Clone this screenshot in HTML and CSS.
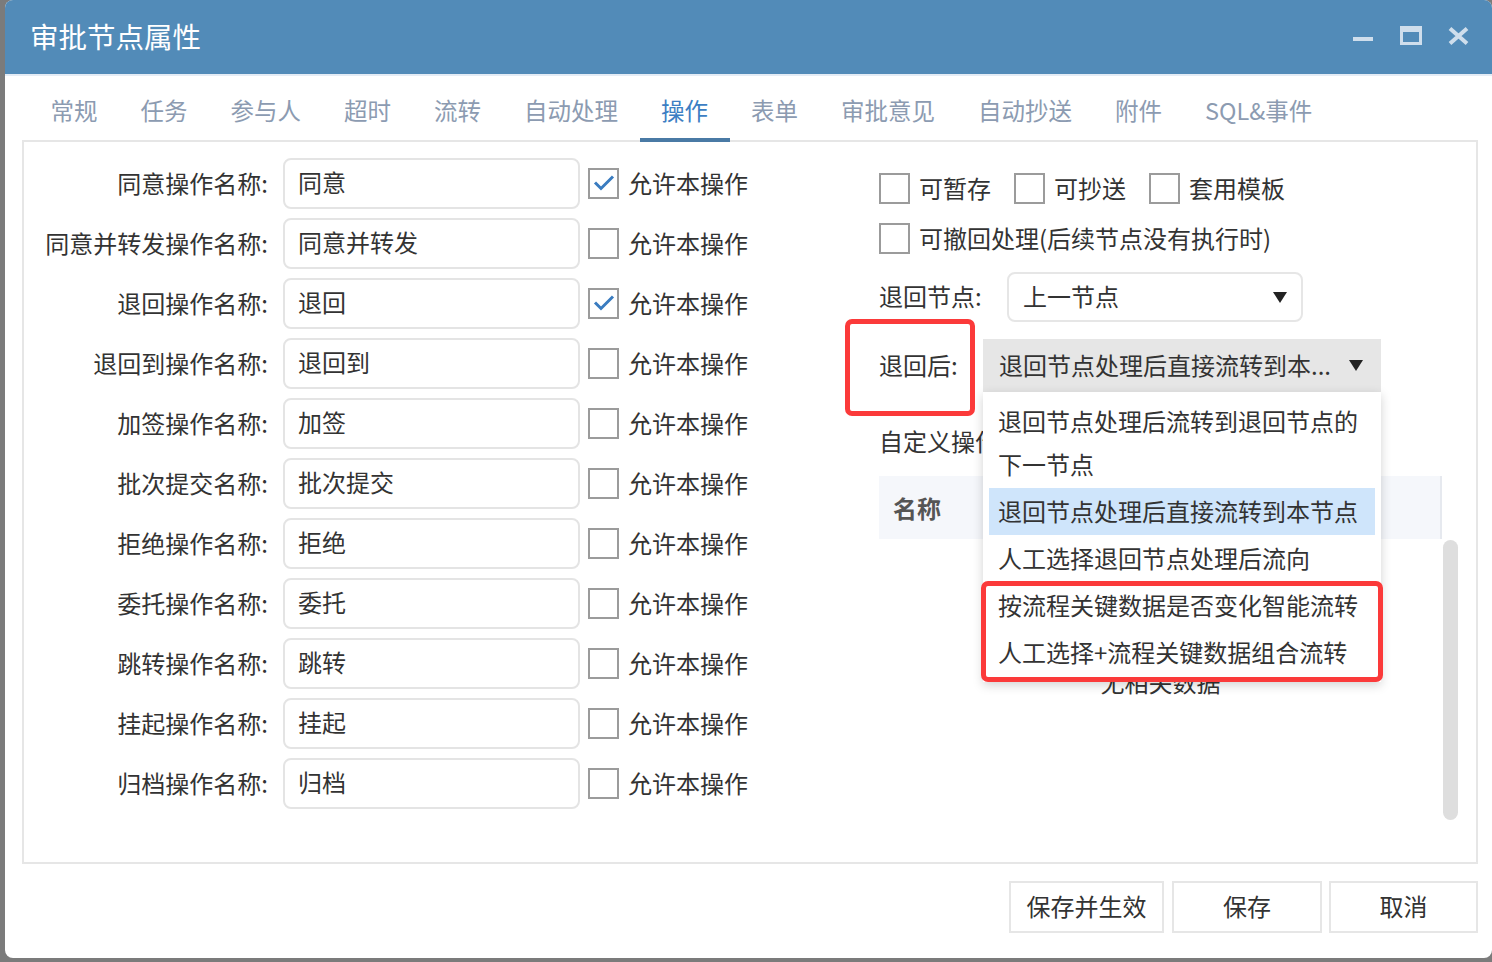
FILE: index.html
```html
<!DOCTYPE html>
<html lang="zh-CN">
<head>
<meta charset="utf-8">
<title>审批节点属性</title>
<link rel="stylesheet" href="styles.css">
</head>
<body>
<div class="window">
  <div class="titlebar">
    <span class="title">审批节点属性</span>
    <div class="controls">
      <svg class="ctl" width="24" height="24" viewBox="0 0 24 24"><rect x="2" y="13" width="20" height="4" fill="currentColor"/></svg>
      <svg class="ctl" width="24" height="24" viewBox="0 0 24 24"><path fill="currentColor" fill-rule="evenodd" d="M1 2H23V21H1Z M4 8H20V18H4Z"/></svg>
      <svg class="ctl" width="24" height="24" viewBox="0 0 24 24"><path d="M4 4.5L21 19.5M21 4.5L4 19.5" stroke="currentColor" stroke-width="4" fill="none"/></svg>
    </div>
  </div>
  <div class="content">
    <div class="tabs">
      <div class="tab">常规</div>
      <div class="tab">任务</div>
      <div class="tab">参与人</div>
      <div class="tab">超时</div>
      <div class="tab">流转</div>
      <div class="tab">自动处理</div>
      <div class="tab active">操作</div>
      <div class="tab">表单</div>
      <div class="tab">审批意见</div>
      <div class="tab">自动抄送</div>
      <div class="tab">附件</div>
      <div class="tab">SQL&amp;事件</div>
    </div>
    <div class="panel">
      <div class="left">
        <div class="row"><span class="label">同意操作名称:</span><div class="input">同意</div><span class="cb checked"><svg width="27" height="27" viewBox="0 0 27 27"><path d="M5 12.5L11 18.5L23 6.5" stroke="#3a7cc0" stroke-width="3" fill="none"/></svg></span><span class="cb-text">允许本操作</span></div>
        <div class="row"><span class="label">同意并转发操作名称:</span><div class="input">同意并转发</div><span class="cb"></span><span class="cb-text">允许本操作</span></div>
        <div class="row"><span class="label">退回操作名称:</span><div class="input">退回</div><span class="cb checked"><svg width="27" height="27" viewBox="0 0 27 27"><path d="M5 12.5L11 18.5L23 6.5" stroke="#3a7cc0" stroke-width="3" fill="none"/></svg></span><span class="cb-text">允许本操作</span></div>
        <div class="row"><span class="label">退回到操作名称:</span><div class="input">退回到</div><span class="cb"></span><span class="cb-text">允许本操作</span></div>
        <div class="row"><span class="label">加签操作名称:</span><div class="input">加签</div><span class="cb"></span><span class="cb-text">允许本操作</span></div>
        <div class="row"><span class="label">批次提交名称:</span><div class="input">批次提交</div><span class="cb"></span><span class="cb-text">允许本操作</span></div>
        <div class="row"><span class="label">拒绝操作名称:</span><div class="input">拒绝</div><span class="cb"></span><span class="cb-text">允许本操作</span></div>
        <div class="row"><span class="label">委托操作名称:</span><div class="input">委托</div><span class="cb"></span><span class="cb-text">允许本操作</span></div>
        <div class="row"><span class="label">跳转操作名称:</span><div class="input">跳转</div><span class="cb"></span><span class="cb-text">允许本操作</span></div>
        <div class="row"><span class="label">挂起操作名称:</span><div class="input">挂起</div><span class="cb"></span><span class="cb-text">允许本操作</span></div>
        <div class="row"><span class="label">归档操作名称:</span><div class="input">归档</div><span class="cb"></span><span class="cb-text">允许本操作</span></div>
      </div>
      <div class="right">
        <div class="opt-row">
          <span class="opt"><span class="cb cb-r"></span><span class="opt-text">可暂存</span></span>
          <span class="opt"><span class="cb cb-r"></span><span class="opt-text">可抄送</span></span>
          <span class="opt"><span class="cb cb-r"></span><span class="opt-text">套用模板</span></span>
        </div>
        <div class="opt-row second">
          <span class="opt"><span class="cb cb-r"></span><span class="opt-text">可撤回处理(后续节点没有执行时)</span></span>
        </div>
        <div class="sel-row node-row">
          <span class="sel-label wide">退回节点:</span>
          <div class="select">
            <span class="sel-text">上一节点</span>
            <svg class="arrow" width="14" height="11" viewBox="0 0 14 11"><polygon points="0,0 14,0 7,11" fill="#222"/></svg>
          </div>
        </div>
        <div class="sel-row after-row">
          <span class="sel-label">退回后:</span>
          <div class="select grey">
            <span class="sel-text">退回节点处理后直接流转到本...</span>
            <svg class="arrow" width="14" height="11" viewBox="0 0 14 11"><polygon points="0,0 14,0 7,11" fill="#222"/></svg>
          </div>
          <div class="mark mark-label"></div>
          <ul class="dropdown">
            <li>退回节点处理后流转到退回节点的下一节点</li>
            <li class="hl">退回节点处理后直接流转到本节点</li>
            <li>人工选择退回节点处理后流向</li>
            <li>按流程关键数据是否变化智能流转</li>
            <li>人工选择+流程关键数据组合流转</li>
            <div class="mark mark-items"></div>
          </ul>
        </div>
        <div class="custom-row">自定义操作：</div>
        <div class="table-wrap">
          <div class="table">
            <div class="thead">名称</div>
            <div class="tbody">无相关数据</div>
          </div>
          <div class="scrollbar"></div>
        </div>
      </div>
    </div>
    <div class="footer">
      <div class="btn b1">保存并生效</div>
      <div class="btn b2">保存</div>
      <div class="btn b3">取消</div>
    </div>
  </div>
</div>
</body>
</html>
```
FILE: styles.css
```css
* { box-sizing: border-box; }
html, body { margin: 0; padding: 0; }
body {
  background: #7b7b7b;
  font-family: "Noto Sans CJK SC", "Noto Sans", sans-serif;
  color: #333;
  width: 1492px;
  height: 962px;
  overflow: hidden;
}
.window {
  margin-left: 5px;
  width: 1487px;
  height: 958px;
  background: #fff;
  border-radius: 8px;
  overflow: hidden;
  display: flex;
  flex-direction: column;
}
.titlebar {
  height: 76px;
  flex: none;
  background: #528bb8;
  border-bottom: 2px solid #e4ecf5;
  display: flex;
  align-items: center;
  padding: 0 22px 0 25px;
}
.title {
  flex: 1;
  color: #fff;
  font-size: 28.5px;
  line-height: 40px;
  margin-top: -3px;
}
.controls {
  display: flex;
  align-self: flex-start;
  margin-top: 24px;
  color: #cfdeec;
}
.ctl { display: block; }
.ctl + .ctl { margin-left: 24px; }
.ctl:last-child { margin-left: 23px; }

.content {
  padding: 0 14px 0 17px;
  flex: 1;
}
.tabs {
  display: flex;
  height: 66px;
  padding-left: 7px;
  position: relative;
  z-index: 2;
}
.tab {
  padding: 6px 21.5px 0;
  font-size: 23.5px;
  color: #8c9bb1;
  display: flex;
  align-items: center;
  border-bottom: 4px solid transparent;
  white-space: nowrap;
}
.tab.active {
  color: #3c7ec3;
  border-bottom-color: #4a7aa5;
}
.panel {
  margin-top: -2px;
  height: 724px;
  border: 2px solid #e6e6e6;
  display: grid;
  grid-template-columns: 855px 1fr;
}
.left { padding-top: 16px; }
.row {
  display: flex;
  align-items: center;
  height: 51px;
  margin-bottom: 9px;
}
.label {
  width: 244px;
  text-align: right;
  font-size: 24px;
  white-space: nowrap;
  margin-top: -3px;
}
.input {
  margin-left: 15px;
  width: 297px;
  height: 51px;
  border: 2px solid #e4e4e4;
  border-radius: 8px;
  padding-left: 13px;
  font-size: 24px;
  line-height: 43px;
}
.cb {
  display: block;
  flex: none;
  width: 31px;
  height: 31px;
  border: 2px solid #9b9b9b;
  background: #fff;
  margin-left: 8px;
}
.cb svg { display: block; }
.cb-text {
  margin-left: 9px;
  font-size: 24px;
  margin-top: -3px;
}

.right {
  padding-top: 31px;
}
.opt-row {
  display: flex;
  align-items: center;
  height: 31px;
}
.opt-row.second { margin-top: 19px; }
.opt {
  display: flex;
  align-items: center;
  margin-right: 23px;
}
.cb-r { margin-left: 0; }
.opt-text {
  margin-left: 9px;
  font-size: 24px;
  white-space: nowrap;
  margin-top: -3px;
}
.sel-row {
  display: flex;
  align-items: center;
  position: relative;
}
.node-row { margin-top: 18px; height: 50px; }
.after-row { margin-top: 17px; height: 53px; z-index: 5; }
.sel-label {
  width: 104px;
  font-size: 24px;
  white-space: nowrap;
  margin-top: -3px;
}
.sel-label.wide { width: 128px; }
.select {
  display: flex;
  align-items: center;
  justify-content: space-between;
  width: 296px;
  height: 50px;
  border: 2px solid #e6e6e6;
  border-radius: 8px;
  padding: 0 14px 0 14px;
  font-size: 24px;
}
.select.grey {
  width: 398px;
  height: 53px;
  border: none;
  border-radius: 0;
  background: #e6e6e6;
  padding: 0 18px 0 16px;
}
.sel-text { white-space: nowrap; margin-top: -3px; }
.arrow { display: block; flex: none; }

.dropdown {
  position: absolute;
  left: 104px;
  top: 53px;
  width: 398px;
  margin: 0;
  padding: 6px;
  list-style: none;
  background: #fff;
  box-shadow: 0 3px 10px rgba(0, 0, 0, 0.18);
  font-size: 24px;
  z-index: 10;
}
.dropdown li {
  padding: 1px 9px 3px;
  line-height: 43px;
}
.dropdown li.hl { background: #cfe5fb; }
.mark {
  position: absolute;
  border: 5px solid #fb3a3a;
  border-radius: 7px;
  pointer-events: none;
}
.mark-label {
  left: -34px;
  top: -20px;
  width: 130px;
  height: 97px;
  z-index: 11;
}
.mark-items {
  left: -2px;
  top: 189px;
  width: 402px;
  height: 101px;
}
.custom-row {
  margin-top: 32px;
  height: 36px;
  line-height: 33px;
  font-size: 24px;
}
.table-wrap {
  margin-top: 16px;
  display: flex;
  align-items: flex-start;
}
.table { width: 563px; }
.thead {
  height: 63px;
  line-height: 63px;
  background: #f5f7fb;
  border-right: 2px solid #e6e9ef;
  padding-left: 14px;
  font-size: 24px;
  font-weight: bold;
  color: #555;
}
.tbody {
  padding-top: 125px;
  height: 290px;
  line-height: 36px;
  text-align: center;
  font-size: 24px;
}
.scrollbar {
  margin-top: 64px;
  margin-left: 1px;
  width: 15px;
  height: 280px;
  background: #dedede;
  border-radius: 8px;
}
.footer {
  display: flex;
  justify-content: flex-end;
  margin-top: 17px;
}
.btn {
  height: 52px;
  border: 2px solid #e6e6e6;
  background: #fff;
  font-size: 24px;
  display: flex;
  align-items: center;
  justify-content: center;
  padding-bottom: 4px;
}
.b1 { width: 155px; }
.b2 { width: 150px; margin-left: 8px; }
.b3 { width: 149px; margin-left: 7px; }
```
